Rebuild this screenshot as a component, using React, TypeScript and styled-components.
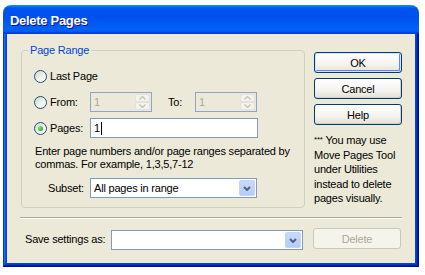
import React from "react";
import styled, { createGlobalStyle } from "styled-components";

const GlobalStyle = createGlobalStyle`
  body {
    margin: 0;
    background: #fff;
    font-family: "Liberation Sans", Arial, sans-serif;
    font-size: 11px;
    letter-spacing: -0.2px;
    color: #000;
  }
`;

const Window = styled.div`
  margin: 5px 0 0 3px;
  width: 416px;
  height: 262px;
  display: flex;
  flex-direction: column;
`;

const TitleBar = styled.div`
  height: 29px;
  flex: none;
  display: flex;
  align-items: center;
  padding: 2px 0 0 7px;
  box-sizing: border-box;
  border-radius: 8px 8px 0 0;
  background: linear-gradient(
    to bottom,
    #0997ff 0%,
    #0053ee 10%,
    #0050ee 40%,
    #0062f8 85%,
    #0058f0 92%,
    #003dd7 96%,
    #003dd7 100%
  );
  color: #fff;
  font-family: "Liberation Sans", Arial, sans-serif;
  font-weight: bold;
  font-size: 13px;
  letter-spacing: -0.3px;
  text-shadow: 1px 1px #0f1089;
`;

const Frame = styled.div`
  flex: 1;
  display: flex;
  padding: 0 4px 4px;
  background: #0842d6;
  box-shadow: inset -1px -1px #00138c, inset 1px 0 #0831d9, inset -2px -2px #001ea0,
    inset 2px 0 #166aee, inset -3px -3px #003bda, inset 3px 0 #0855dd;
`;

const Client = styled.div`
  flex: 1;
  display: flex;
  flex-direction: column;
  background: #ece9d8;
  padding: 10px 13px 0 14px;
`;

const Main = styled.div`
  display: flex;
  align-items: flex-start;
  gap: 9px;
`;

const Group = styled.fieldset`
  width: 284px;
  box-sizing: border-box;
  margin: 0;
  min-width: 0;
  padding: 9px 10px 9px 12px;
  border: 1px solid #d0d0bf;
  border-radius: 4px;
  display: flex;
  flex-direction: column;
`;

const Legend = styled.legend`
  color: #0046d5;
  padding: 0 2px;
  margin-left: -6px;
  line-height: 13px;
`;

const Rows = styled.div`
  display: flex;
  flex-direction: column;
  gap: 6px;
`;

const Row = styled.div`
  display: flex;
  align-items: center;
  height: 20px;
`;

const RadioLabel = styled.label`
  display: flex;
  align-items: center;
  gap: 3px;
  width: 56px;
  flex: none;
  white-space: nowrap;
`;

const Radio = styled.span<{ checked?: boolean }>`
  width: 13px;
  height: 13px;
  flex: none;
  box-sizing: border-box;
  border-radius: 50%;
  border: 1px solid #1c5180;
  background: linear-gradient(135deg, #d4d4cc 0%, #f4f4f0 60%, #fff 100%);
  display: flex;
  align-items: center;
  justify-content: center;

  &::after {
    content: "";
    display: ${p => (p.checked ? "block" : "none")};
    width: 5px;
    height: 5px;
    border-radius: 50%;
    background: radial-gradient(circle at 35% 35%, #8be888 0%, #3dc03a 50%, #1d961b 100%);
  }
`;

const SpinField = styled.div`
  width: 62px;
  height: 20px;
  box-sizing: border-box;
  border: 1px solid #8fa6c3;
  background: #ece9d8;
  display: flex;
`;

const FieldValue = styled.span<{ disabled?: boolean }>`
  flex: 1;
  display: flex;
  align-items: center;
  padding-left: 3px;
  color: ${p => (p.disabled ? "#aca899" : "#000")};
`;

const SpinButtons = styled.div`
  width: 15px;
  margin: 1px;
  display: flex;
  flex-direction: column;
`;

const SpinButton = styled.span`
  flex: 1;
  display: flex;
  align-items: center;
  justify-content: center;
  background: #f4f3ee;
  border: 1px solid #e4e2d8;
  border-radius: 2px;
`;

const ToLabel = styled.span`
  margin-left: 16px;
  width: 27px;
`;

const TextInput = styled.div`
  width: 168px;
  height: 20px;
  box-sizing: border-box;
  border: 1px solid #7f9db9;
  background: #fff;
  display: flex;
  align-items: center;
  padding-left: 3px;
`;

const Caret = styled.span`
  width: 1px;
  height: 13px;
  background: #000;
  margin-left: 1px;
`;

const Hint = styled.div`
  margin: 7px 0 0 1px;
  line-height: 13px;
`;

const SubsetRow = styled.div`
  display: flex;
  align-items: center;
  margin-top: 7px;
  padding-left: 14px;
`;

const SubsetLabel = styled.span`
  width: 42px;
`;

const Combo = styled.div<{ width: number }>`
  width: ${p => p.width}px;
  height: 20px;
  box-sizing: border-box;
  border: 1px solid #7f9db9;
  background: #fff;
  display: flex;
`;

const ComboText = styled.span`
  flex: 1;
  display: flex;
  align-items: center;
  padding-left: 3px;
`;

const DropButton = styled.span`
  width: 16px;
  margin: 1px;
  box-sizing: border-box;
  border: 1px solid #c3d3fd;
  border-radius: 2px;
  background: linear-gradient(#cad9fc, #b6cbf8);
  display: flex;
  align-items: center;
  justify-content: center;
`;

const Side = styled.div`
  width: 88px;
  flex: none;
  padding-top: 8px;
  display: flex;
  flex-direction: column;
  gap: 5px;
`;

const Button = styled.button<{ primary?: boolean }>`
  width: 88px;
  height: 21px;
  padding: 0;
  box-sizing: border-box;
  font-family: inherit;
  font-size: 11px;
  letter-spacing: -0.2px;
  color: #000;
  border: 1px solid #003c74;
  border-radius: 3px;
  background: linear-gradient(#ffffff 0%, #f4f3ee 60%, #e3e0d6 100%);
  box-shadow: ${p =>
    p.primary
      ? "inset 0 0 0 1px #cee7ff, inset -1px -1px 0 1px #6982ee"
      : "inset -1px -1px 0 0 #d6d0c5"};

  &:disabled {
    color: #aca899;
    border-color: #c9c7ba;
    background: #f5f4ea;
    box-shadow: none;
  }
`;

const Note = styled.div`
  margin-top: 3px;
  line-height: 14.5px;
  white-space: nowrap;
`;

const Stars = styled.span`
  font-size: 8px;
  vertical-align: 2px;
`;

const Separator = styled.div`
  margin: 9px 0 0 -1px;
  border-top: 1px solid #aca899;
  border-bottom: 1px solid #fff;
`;

const BottomRow = styled.div`
  display: flex;
  align-items: flex-start;
  margin-top: 9px;
  padding-left: 4px;
`;

const SaveLabel = styled.span`
  width: 86px;
  line-height: 22px;
`;

const ComboSlot = styled.div`
  margin-top: 2px;
`;

const DeleteSlot = styled.div`
  margin-left: 10px;
`;

const Chevron = ({ color, up }: { color: string; up?: boolean }) => (
  <svg width="7" height="4" viewBox="0 0 7 4">
    <path d={up ? "M0.5 3.5 L3.5 0.5 L6.5 3.5" : "M0.5 0.5 L3.5 3.5 L6.5 0.5"} fill="none" stroke={color} strokeWidth="1.2" />
  </svg>
);

const DropArrow = () => (
  <svg width="8" height="5" viewBox="0 0 8 5">
    <path d="M1 1 L4 4 L7 1" fill="none" stroke="#4d6185" strokeWidth="2" />
  </svg>
);

const Spinner = () => (
  <SpinField>
    <FieldValue disabled>1</FieldValue>
    <SpinButtons>
      <SpinButton>
        <Chevron color="#c5c2b2" up />
      </SpinButton>
      <SpinButton>
        <Chevron color="#c5c2b2" />
      </SpinButton>
    </SpinButtons>
  </SpinField>
);

const Dropdown = ({ width, text }: { width: number; text?: string }) => (
  <Combo width={width}>
    <ComboText>{text}</ComboText>
    <DropButton>
      <DropArrow />
    </DropButton>
  </Combo>
);

export default function App() {
  return (
    <>
      <GlobalStyle />
      <Window>
        <TitleBar>Delete Pages</TitleBar>
        <Frame>
          <Client>
            <Main>
              <Group>
                <Legend>Page Range</Legend>
                <Rows>
                  <Row>
                    <RadioLabel>
                      <Radio />
                      Last Page
                    </RadioLabel>
                  </Row>
                  <Row>
                    <RadioLabel>
                      <Radio />
                      From:
                    </RadioLabel>
                    <Spinner />
                    <ToLabel>To:</ToLabel>
                    <Spinner />
                  </Row>
                  <Row>
                    <RadioLabel>
                      <Radio checked />
                      Pages:
                    </RadioLabel>
                    <TextInput>
                      1<Caret />
                    </TextInput>
                  </Row>
                </Rows>
                <Hint>
                  Enter page numbers and/or page ranges separated by
                  <br />
                  commas. For example, 1,3,5,7-12
                </Hint>
                <SubsetRow>
                  <SubsetLabel>Subset:</SubsetLabel>
                  <Dropdown width={167} text="All pages in range" />
                </SubsetRow>
              </Group>
              <Side>
                <Button primary>OK</Button>
                <Button>Cancel</Button>
                <Button>Help</Button>
                <Note>
                  <Stars>***</Stars> You may use
                  <br />
                  Move Pages Tool
                  <br />
                  under Utilities
                  <br />
                  instead to delete
                  <br />
                  pages visually.
                </Note>
              </Side>
            </Main>
            <Separator />
            <BottomRow>
              <SaveLabel>Save settings as:</SaveLabel>
              <ComboSlot>
                <Dropdown width={192} />
              </ComboSlot>
              <DeleteSlot>
                <Button disabled>Delete</Button>
              </DeleteSlot>
            </BottomRow>
          </Client>
        </Frame>
      </Window>
    </>
  );
}
